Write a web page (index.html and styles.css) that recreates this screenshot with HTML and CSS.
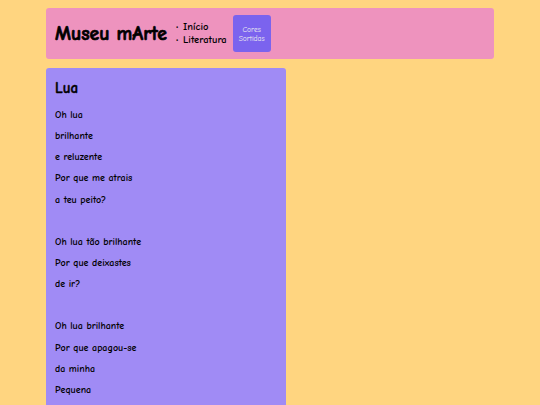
FILE: index.html
```html
<!DOCTYPE html>
<html lang="pt">
<head>
<meta charset="utf-8">
<title>Museu mArte</title>
<link rel="stylesheet" href="styles.css">
</head>
<body>
<header class="topo">
  <h1 class="marca">Museu mArte</h1>
  <ul class="menu">
    <li>Início</li>
    <li>Literatura</li>
  </ul>
  <button class="botao">Cores Sortidas</button>
</header>
<main class="cartao">
  <h2 class="titulo">Lua</h2>
  <div class="poema">
    <p class="verso">Oh lua</p>
    <p class="verso">brilhante</p>
    <p class="verso">e reluzente</p>
    <p class="verso">Por que me atrais</p>
    <p class="verso">a teu peito?</p>
    <p class="verso vazio"></p>
    <p class="verso">Oh lua tão brilhante</p>
    <p class="verso">Por que deixastes</p>
    <p class="verso">de ir?</p>
    <p class="verso vazio"></p>
    <p class="verso">Oh lua brilhante</p>
    <p class="verso">Por que apagou-se</p>
    <p class="verso">da minha</p>
    <p class="verso">Pequena</p>
    <p class="verso">vida?</p>
  </div>
</main>
</body>
</html>
```
FILE: styles.css
```css
html, body {
  margin: 0;
  padding: 0;
}
body {
  background: #ffd580;
  font-family: "Comic Sans MS", "Comic Neue", cursive;
  color: #000;
  padding: 8px 46px 0 46px;
}
.topo {
  display: flex;
  align-items: center;
  background: #ee93be;
  border-radius: 3px;
  height: 51px;
  padding: 0 9px;
  box-sizing: border-box;
}
.marca {
  margin: 0;
  font-size: 19.8px;
  font-weight: 600;
  -webkit-text-stroke: 0.7px #000;
}
.menu {
  margin: 0 0 0 9px;
  padding: 0;
  list-style: none;
  font-size: 10.5px;
  line-height: 13px;
  font-weight: 600;
}
.menu li::before {
  content: "•";
  font-size: 7px;
  display: inline-block;
  width: 7px;
  vertical-align: 1px;
}
.botao {
  margin-left: 6px;
  width: 38px;
  height: 37px;
  border: none;
  border-radius: 3px;
  background: #7b63ee;
  color: #eee;
  font-family: inherit;
  font-size: 7.5px;
  line-height: 9px;
  padding: 0;
}
.cartao {
  margin-top: 9px;
  width: 240px;
  background: #a08bf5;
  border-radius: 3px;
  padding: 10px 9px 10px 9px;
  box-sizing: border-box;
}
.titulo {
  margin: 0 0 11px 0;
  font-size: 15px;
  font-weight: 600;
  -webkit-text-stroke: 0.4px #000;
  line-height: 20px;
}
.verso {
  margin: 0;
  height: 21.15px;
  line-height: 12px;
  font-size: 10px;
  font-weight: 600;
}
```
